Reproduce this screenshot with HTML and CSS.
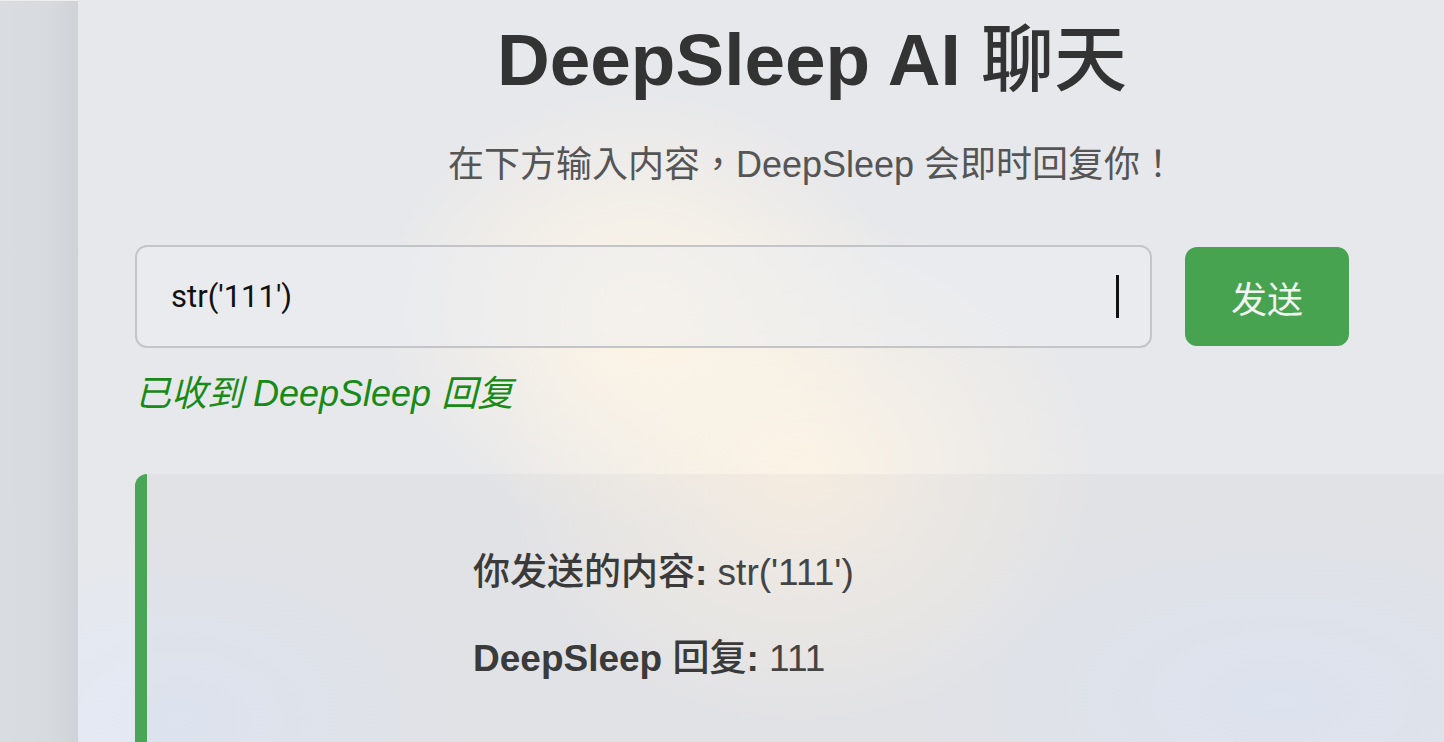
FILE: index.html
```html
<!DOCTYPE html>
<html lang="zh-CN">
<head>
  <meta charset="UTF-8">
  <meta name="viewport" content="width=device-width, initial-scale=1.0">
  <title>DeepSleep AI 聊天</title>
  <link rel="stylesheet" href="styles.css">
</head>
<body>
  <div class="page">
    <div class="side-edge"></div>

    <main class="chat-panel">
      <header class="chat-header">
        <h1>DeepSleep AI <span class="cjk">聊天</span></h1>
        <p class="subtitle" lang="zh-TW">在下方输入内容，DeepSleep 会即时回复你！</p>
      </header>

      <form class="chat-form" onsubmit="return false;">
        <div class="input-wrap">
          <input type="text" class="chat-input" value="str('111')">
          <span class="text-cursor"></span>
        </div>
        <button type="submit" class="send-btn">发送</button>
      </form>

      <p class="status">已收到 DeepSleep 回复</p>

      <section class="reply-card">
        <p><strong><span class="cjk">你发送的内容</span>:</strong> str('111')</p>
        <p><strong>DeepSleep <span class="cjk">回复</span>:</strong> 111</p>
      </section>
    </main>
  </div>
</body>
</html>
```

FILE: styles.css
```css
* { margin: 0; padding: 0; box-sizing: border-box; }

html, body {
  height: 100%;
  overflow: hidden;
}

body {
  font-family: "Liberation Sans", "Noto Sans CJK TC", sans-serif;
  background: #e7e8eb;
  color: #333;
}

.page {
  display: flex;
  min-height: 100vh;
}

.side-edge {
  width: 78px;
  flex-shrink: 0;
  background: linear-gradient(to right, #d9dce1 0%, #d7dadf 60%, #cfd2d7 100%);
  border-top: 1px solid #eceef0;
}

.chat-panel {
  flex: 1;
  padding-left: 57px;
  background:
    radial-gradient(ellipse 260px 220px at 560px 310px, rgba(255, 246, 230, 0.95), rgba(255, 246, 230, 0) 100%),
    radial-gradient(ellipse 300px 260px at 720px 470px, rgba(255, 245, 228, 0.85), rgba(255, 245, 228, 0) 100%),
    radial-gradient(ellipse 380px 200px at 1200px 700px, rgba(226, 233, 246, 0.9), rgba(226, 233, 246, 0) 100%),
    radial-gradient(ellipse 300px 200px at 100px 720px, rgba(226, 233, 246, 0.9), rgba(226, 233, 246, 0) 100%),
    #e7e8eb;
}

.cjk {
  font-weight: 500;
}

.chat-header {
  width: 1354px;
  text-align: center;
}

.chat-header h1 {
  font-size: 73px;
  font-weight: bold;
  line-height: 84px;
  padding-top: 18px;
  color: #333;
}

.subtitle {
  font-size: 36px;
  line-height: 42px;
  margin-top: 42px;
  color: #555;
}

.chat-form {
  display: flex;
  align-items: center;
  gap: 33px;
  margin-top: 59px;
}

.input-wrap {
  position: relative;
  width: 1017px;
}

.chat-input {
  display: block;
  width: 100%;
  height: 103px;
  padding: 0 34px;
  border: 2px solid #c3c5c9;
  border-radius: 12px;
  background: rgba(236, 237, 241, 0.5);
  font-family: Roboto, "Noto Sans CJK TC", sans-serif;
  font-size: 31px;
  color: #111;
  outline: none;
}

/* mouse I-beam sitting over the field */
.text-cursor {
  position: absolute;
  left: 981px;
  top: 30px;
  width: 3px;
  height: 43px;
  background: #111;
}

.send-btn {
  width: 164px;
  height: 99px;
  border: none;
  border-radius: 12px;
  background: #48a350;
  color: #f2f4f0;
  font-family: "Noto Sans CJK TC", sans-serif;
  font-size: 36px;
  cursor: pointer;
}

.status {
  margin-top: 24px;
  font-size: 36px;
  line-height: 44px;
  font-style: italic;
  color: #178a17;
}

.reply-card {
  margin-top: 58px;
  padding: 77px 0 0 326px;
  min-height: 300px;
  border-left: 12px solid #4aa556;
  border-top-left-radius: 12px;
  background: rgba(110, 115, 130, 0.05);
  font-size: 37px;
  color: #444;
}

.reply-card p {
  line-height: 44px;
  margin-bottom: 42px;
}

.reply-card strong {
  color: #3a3a3a;
}
```
